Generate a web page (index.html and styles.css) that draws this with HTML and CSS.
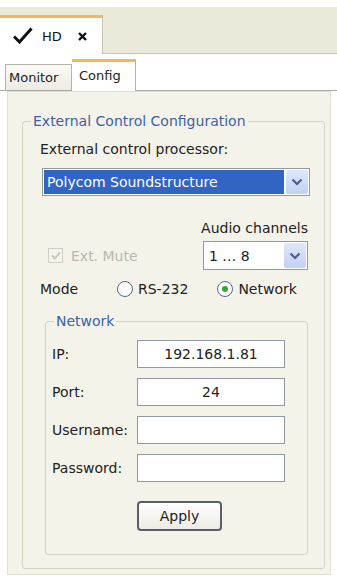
FILE: index.html
```html
<!DOCTYPE html>
<html lang="en">
<head>
    <meta charset="UTF-8">
    <meta name="viewport" content="width=device-width, initial-scale=1.0">
    <title>HD - Config</title>
    <link rel="stylesheet" href="styles.css">
</head>
<body>
<div class="doc-bar">
    <div class="doc-tab">
        <svg class="doc-check" width="20" height="17" viewBox="0 0 20 17">
            <path d="M1 9.5 L6.5 15 L18.5 1.5" fill="none" stroke="#111" stroke-width="3" stroke-linejoin="miter"/>
        </svg>
        <span class="doc-title">HD</span>
        <svg class="doc-close" width="9" height="9" viewBox="0 0 9 9">
            <path d="M1 1 L8 8 M8 1 L1 8" stroke="#111" stroke-width="2.4"/>
        </svg>
    </div>
</div>

<div class="sub-tabs">
    <div class="sub-tab">Monitor</div>
    <div class="sub-tab active">Config</div>
</div>

<div class="panel">
    <fieldset class="group">
        <legend class="group-title">External Control Configuration</legend>
        <div class="group-body">
            <div class="field-label">External control processor:</div>
            <div class="combo combo-wide">
                <div class="combo-value selected">Polycom Soundstructure</div>
                <div class="combo-button">
                    <svg width="12" height="8" viewBox="0 0 12 8"><path d="M1.5 1.5 L6 6 L10.5 1.5" fill="none" stroke="#4d5f8c" stroke-width="2.2"/></svg>
                </div>
            </div>

            <div class="channels-label">Audio channels</div>
            <div class="mute-row">
                <label class="check disabled">
                    <span class="check-box">
                        <svg width="10" height="9" viewBox="0 0 10 9"><path d="M1 4.5 L4 7.5 L9 1.5" fill="none" stroke="#c4c4b8" stroke-width="1.8"/></svg>
                    </span>
                    Ext. Mute
                </label>
                <div class="combo combo-small">
                    <div class="combo-value">1 … 8</div>
                    <div class="combo-button">
                        <svg width="12" height="8" viewBox="0 0 12 8"><path d="M1.5 1.5 L6 6 L10.5 1.5" fill="none" stroke="#4d5f8c" stroke-width="2.2"/></svg>
                    </div>
                </div>
            </div>

            <div class="mode-row">
                <span class="mode-label">Mode</span>
                <label class="radio"><span class="radio-dot"></span>RS-232</label>
                <label class="radio checked"><span class="radio-dot"></span>Network</label>
            </div>

            <fieldset class="group network">
                <legend class="group-title">Network</legend>
                <div class="network-body">
                    <div class="form-row">
                        <label class="row-label">IP:</label>
                        <input type="text" class="text-input" value="192.168.1.81">
                    </div>
                    <div class="form-row">
                        <label class="row-label">Port:</label>
                        <input type="text" class="text-input" value="24">
                    </div>
                    <div class="form-row">
                        <label class="row-label">Username:</label>
                        <input type="text" class="text-input" value="">
                    </div>
                    <div class="form-row">
                        <label class="row-label">Password:</label>
                        <input type="password" class="text-input" value="">
                    </div>
                    <button type="button" class="apply">Apply</button>
                </div>
            </fieldset>
        </div>
    </fieldset>
</div>
</body>
</html>
```

FILE: styles.css
```css
:root {
    --bar-color: #ebe9d9;
    --panel-color: #f4f3e9;
    --group-border: #d5d2c0;
    --legend-color: #3d5fa6;
    --tab-accent: #f0b860;
    --input-border: #8f9aa6;
    --text-color: #222;
}

body {
    margin: 0;
    background: #fff;
    color: var(--text-color);
    font-family: "DejaVu Sans", Verdana, sans-serif;
    font-size: 14px;
    width: 337px;
    height: 581px;
    overflow: hidden;
}

/* document tab strip */
.doc-bar {
    margin-top: 7px;
    height: 46px;
    background: var(--bar-color);
    border-bottom: 1px solid #c4c2b2;
    display: flex;
    align-items: flex-end;
}

.doc-tab {
    width: 103px;
    height: 39px;
    background: #fff;
    border-top: 3px solid var(--tab-accent);
    border-right: 1px solid #c8c6b6;
    margin-bottom: -1px;
    display: flex;
    align-items: center;
    padding-left: 13px;
    box-sizing: border-box;
}

.doc-check {
    margin-top: -2px;
}

.doc-title {
    margin-left: 9px;
    font-size: 13px;
    color: #111;
}

.doc-close {
    margin-left: 16px;
}

/* sub tabs */
.sub-tabs {
    height: 37px;
    display: flex;
    align-items: flex-end;
    padding-left: 5px;
    border-bottom: 1px solid #a9a99e;
    box-sizing: border-box;
}

.sub-tab {
    height: 26px;
    padding: 0 3px;
    width: 67px;
    box-sizing: border-box;
    border: 1px solid #b5b3a6;
    border-bottom: none;
    background: linear-gradient(#fbfbf8, #ecebe4);
    display: flex;
    align-items: center;
    font-size: 13px;
}

.sub-tab.active {
    width: 64px;
    height: 32px;
    background: #fff;
    border-top: 3px solid var(--tab-accent);
    border-left: none;
    margin-bottom: -1px;
    padding-left: 7px;
    padding-bottom: 3px;
}

/* main panel */
.panel {
    margin: 0 6px 0 7px;
    height: 484px;
    background: var(--panel-color);
    border: 1px solid #e2e0d2;
    padding: 20px 5px 0 14px;
    box-sizing: border-box;
}

.group {
    margin: 0;
    padding: 0;
    border: 1px solid var(--group-border);
    border-radius: 3px;
}

.group-title {
    color: var(--legend-color);
    margin-left: 8px;
    padding: 0 2px;
    line-height: 18px;
}

.group-body {
    padding: 0 14px 13px 17px;
}

.field-label {
    margin-top: 10px;
    line-height: 18px;
}

.combo {
    display: flex;
    background: #fff;
    border: 1px solid var(--input-border);
    box-sizing: border-box;
    padding: 1px;
}

.combo-wide {
    margin-top: 10px;
    margin-left: 2px;
    height: 28px;
}

.combo-value {
    flex: 1;
    display: flex;
    align-items: center;
    padding-left: 3px;
}

.combo-value.selected {
    background: #3264c4;
    color: #fff;
    margin-right: 2px;
}

.combo-button {
    width: 22px;
    display: flex;
    align-items: center;
    justify-content: center;
    background: linear-gradient(#dfe7fb, #c2d1f4);
    border-radius: 2px;
}

.channels-label {
    margin-top: 23px;
    line-height: 18px;
    text-align: right;
    padding-right: 2px;
}

.mute-row {
    margin-top: 4px;
    display: flex;
    align-items: center;
    justify-content: space-between;
}

.combo-small {
    width: 105px;
    height: 29px;
    margin-right: 2px;
}

.combo-small .combo-value {
    padding-left: 4px;
}

.check {
    display: flex;
    align-items: center;
    margin-left: 8px;
}

.check.disabled {
    color: #b8b8ac;
}

.check-box {
    width: 13px;
    height: 13px;
    border: 1px solid #cfcfc4;
    background: #f4f4ee;
    display: flex;
    align-items: center;
    justify-content: center;
    margin-right: 8px;
}

.mode-row {
    margin-top: 10px;
    display: flex;
    align-items: center;
    line-height: 18px;
}

.mode-label {
    width: 77px;
}

.radio {
    display: flex;
    align-items: center;
}

.radio + .radio {
    margin-left: 29px;
}

.radio-dot {
    width: 16px;
    height: 16px;
    border: 1px solid #52698c;
    border-radius: 50%;
    background: #fff;
    box-sizing: border-box;
    margin-right: 5px;
    display: flex;
    align-items: center;
    justify-content: center;
}

.radio.checked .radio-dot::after {
    content: "";
    width: 6px;
    height: 6px;
    border-radius: 50%;
    background: #35a535;
}

.group.network {
    margin: 14px 2px 0 5px;
}

.network-body {
    padding: 0 22px 23px 6px;
}

.form-row {
    display: flex;
    align-items: center;
    height: 28px;
    margin-top: 10px;
}

.row-label {
    width: 85px;
    flex-shrink: 0;
}

.text-input {
    width: 148px;
    height: 28px;
    box-sizing: border-box;
    border: 1px solid var(--input-border);
    background: #fff;
    font-family: inherit;
    font-size: 14px;
    color: var(--text-color);
    text-align: center;
    padding: 0;
}

.apply {
    margin: 19px 0 0 85px;
    width: 85px;
    height: 30px;
    border: 2px solid #5a5f66;
    border-radius: 4px;
    background: linear-gradient(#ffffff, #ecebe4);
    font-family: inherit;
    font-size: 14px;
    color: var(--text-color);
}
```
